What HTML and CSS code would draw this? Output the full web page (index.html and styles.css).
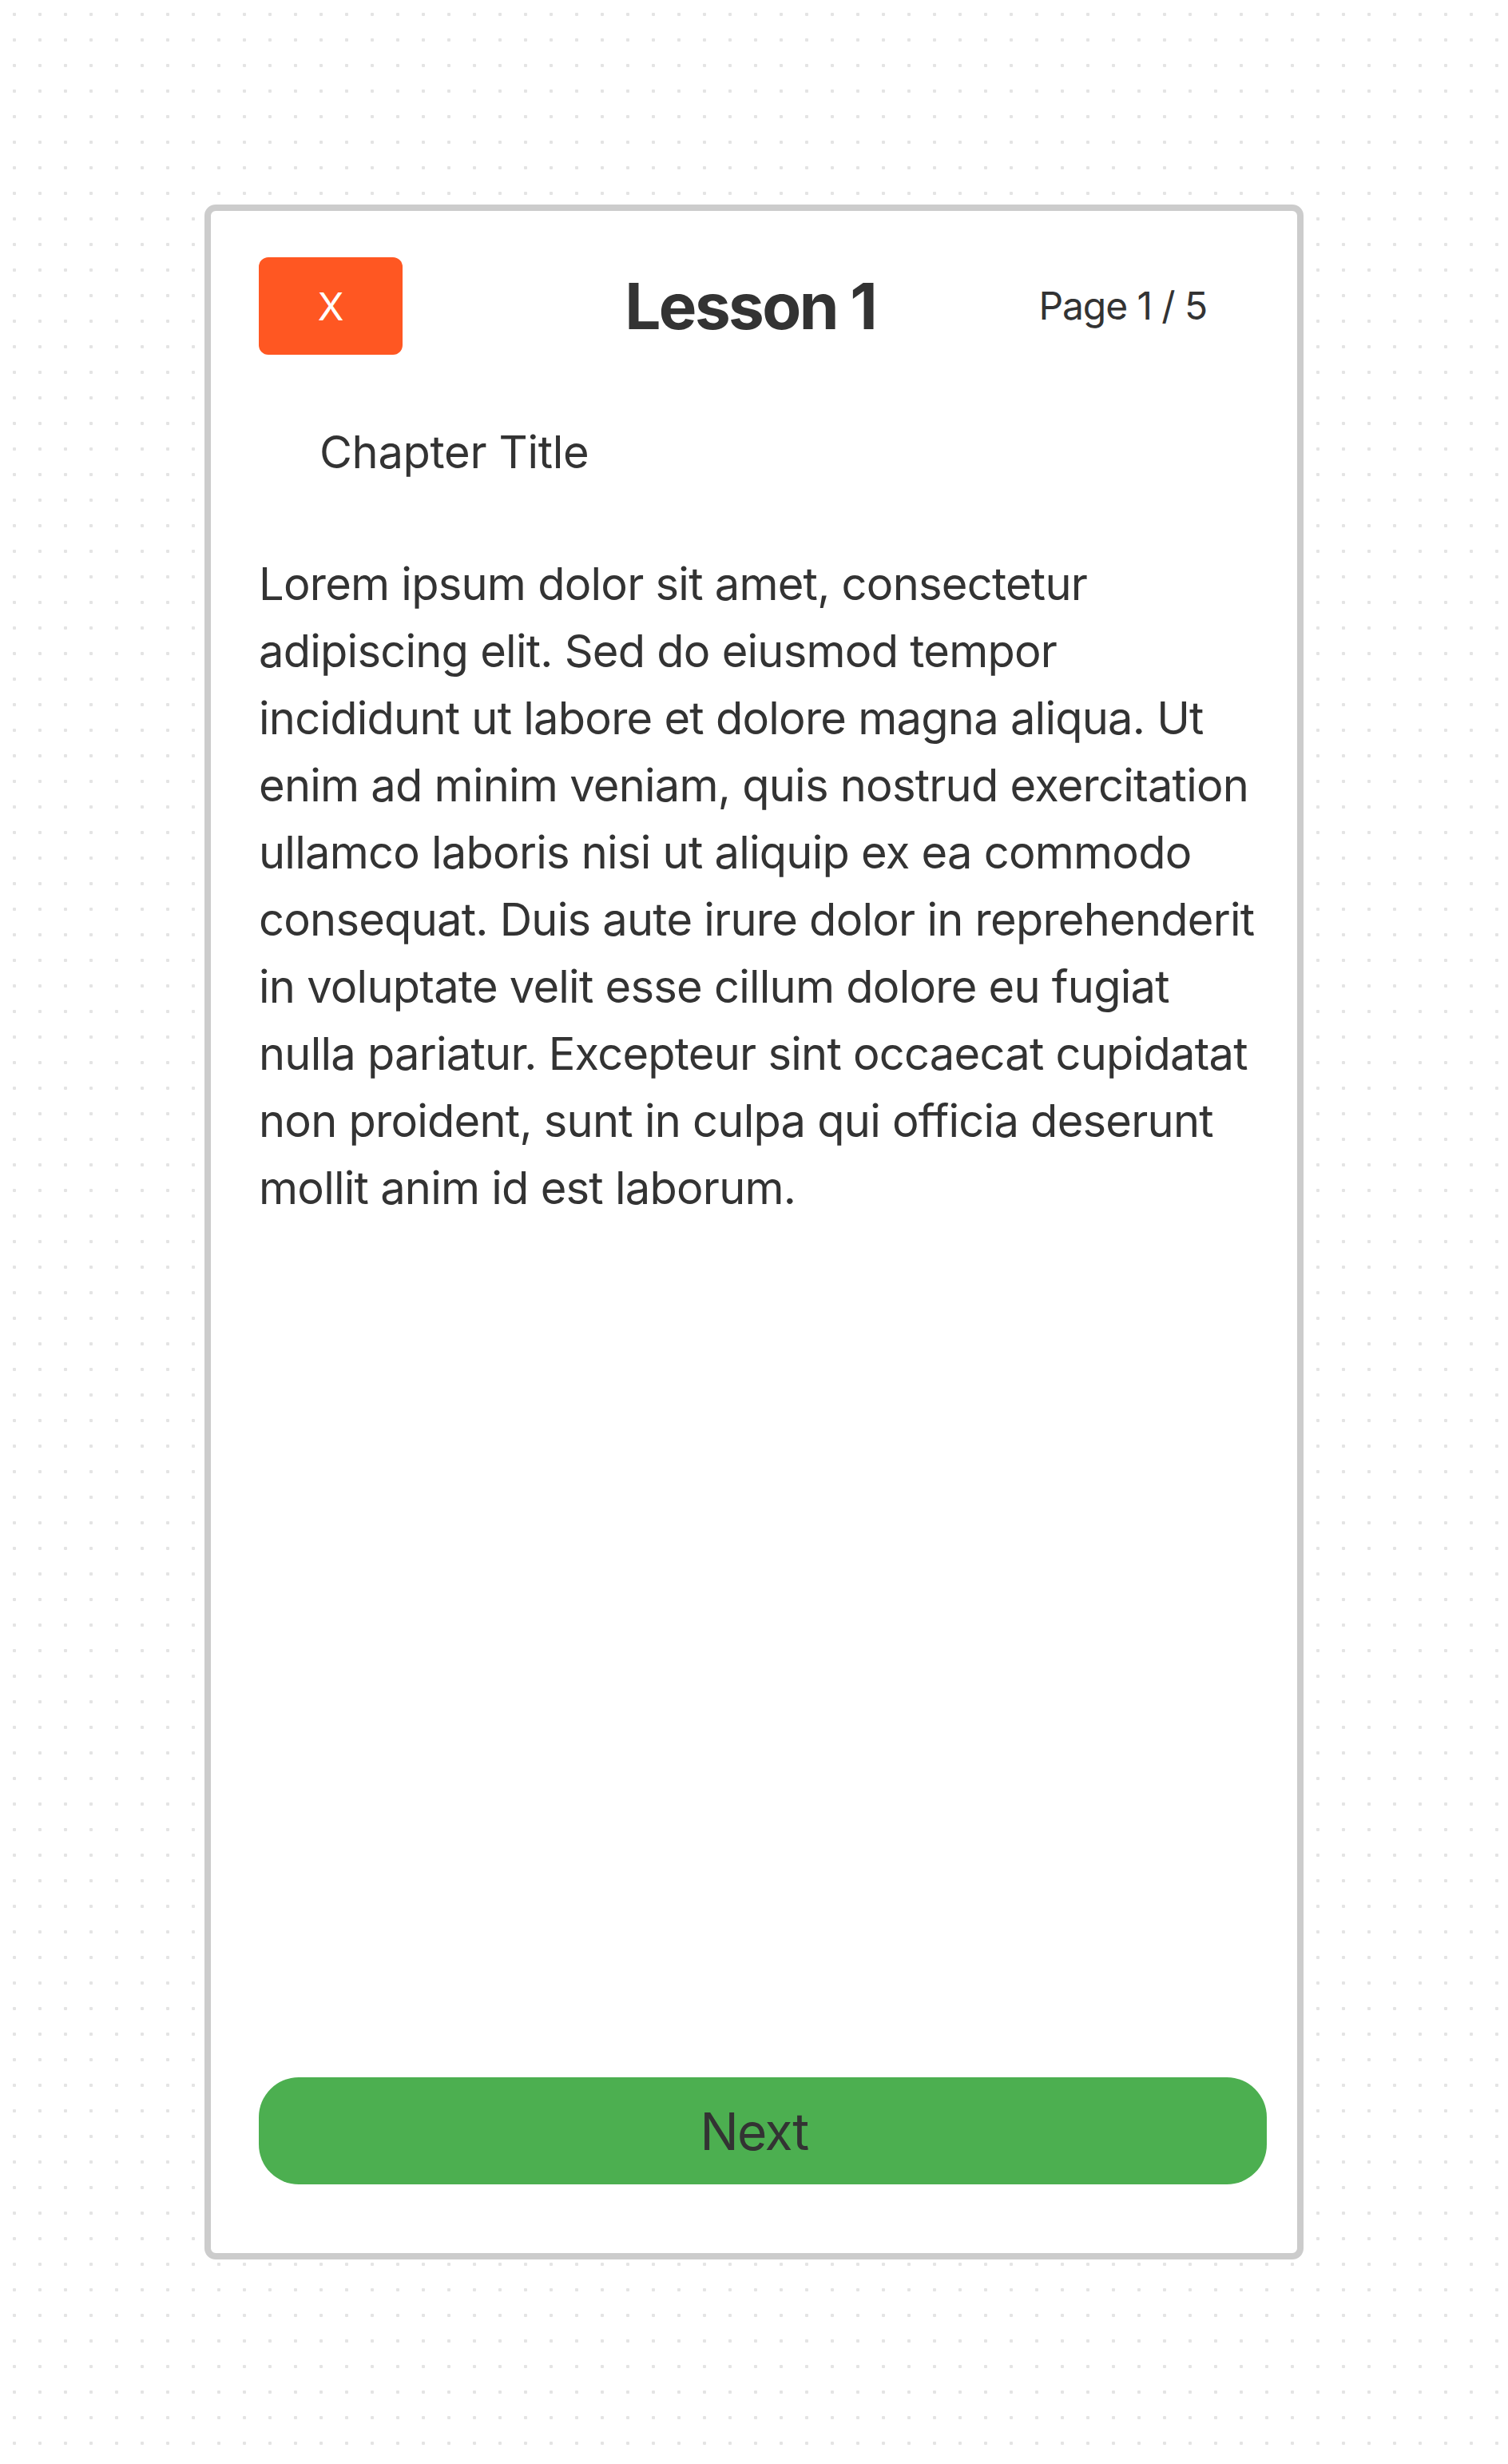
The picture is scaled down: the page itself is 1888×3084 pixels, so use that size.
FILE: index.html
```html
<!DOCTYPE html>
<html lang="en">
<head>
<meta charset="utf-8">
<title>Lesson 1</title>
<link rel="stylesheet" href="styles.css">
</head>
<body>
  <main class="card">
    <header class="lesson-header">
      <button class="close-btn" type="button">X</button>
      <h1 class="lesson-title">Lesson 1</h1>
      <span class="page-indicator">Page 1 / 5</span>
    </header>
    <h2 class="chapter-title">Chapter Title</h2>
    <p class="lesson-text">Lorem ipsum dolor sit amet, consectetur adipiscing elit. Sed do eiusmod tempor incididunt ut labore et dolore magna aliqua. Ut enim ad minim veniam, quis nostrud exercitation ullamco laboris nisi ut aliquip ex ea commodo consequat. Duis aute irure dolor in reprehenderit in voluptate velit esse cillum dolore eu fugiat nulla pariatur. Excepteur sint occaecat cupidatat non proident, sunt in culpa qui officia deserunt mollit anim id est laborum.</p>
    <button class="next-btn" type="button">Next</button>
  </main>
</body>
</html>
```
FILE: styles.css
```css
html {
  background-color: #ffffff;
  background-image: radial-gradient(circle, #e4e4e4 2px, transparent 2.5px);
  background-size: 32px 32px;
  background-position: 2px 2px;
}

body {
  margin: 0;
  padding: 256px;
  font-family: Inter, "Noto Sans", sans-serif;
  color: #333333;
}

.card {
  box-sizing: border-box;
  width: 1376px;
  height: 2572px;
  background: #ffffff;
  border: 8px solid #cccccc;
  border-radius: 14px;
  padding: 58px 38px 86px 60px;
  display: flex;
  flex-direction: column;
}

.lesson-header {
  display: flex;
  align-items: center;
  margin-bottom: 80px;
}

.close-btn {
  width: 180px;
  height: 122px;
  flex: none;
  background: #ff5722;
  color: #ffffff;
  border: none;
  border-radius: 12px;
  font-family: Inter, "Noto Sans", sans-serif;
  font-size: 48px;
  padding: 0;
}

.lesson-title {
  flex: 1;
  margin: 0;
  padding-left: 74px;
  text-align: center;
  font-size: 80px;
  font-weight: 700;
  line-height: 1.2;
  letter-spacing: -2.6px;
}

.page-indicator {
  margin-right: 75px;
  font-size: 48px;
  line-height: 1.2;
  letter-spacing: -1.1px;
}

.chapter-title {
  margin: 0 0 81px;
  padding-left: 76px;
  font-size: 56px;
  font-weight: 400;
  line-height: 84px;
  letter-spacing: -0.3px;
}

.lesson-text {
  flex: 1;
  margin: 0;
  font-size: 56px;
  line-height: 84px;
  letter-spacing: -0.75px;
}

.next-btn {
  width: 100%;
  height: 134px;
  flex: none;
  background: #4caf50;
  color: #333333;
  border: none;
  border-radius: 50px;
  padding: 0 22px 0 0;
  font-family: Inter, "Noto Sans", sans-serif;
  font-size: 64px;
  letter-spacing: -1.5px;
}
```
